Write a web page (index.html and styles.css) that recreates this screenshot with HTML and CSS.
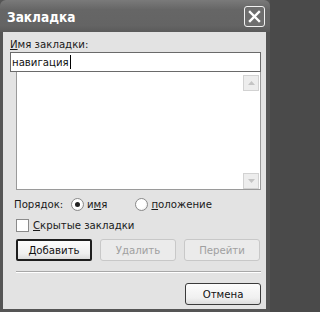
FILE: index.html
```html
<!DOCTYPE html>
<html>
<head>
<meta charset="utf-8">
<link rel="stylesheet" href="styles.css">
</head>
<body>
<div class="window">
  <div class="titlebar">
    <span class="title">Закладка</span>
    <span class="close"><svg width="13" height="13" viewBox="0 0 13 13"><path d="M2 2 L11 11 M11 2 L2 11" stroke="#fff" stroke-width="2.4" stroke-linecap="square"/></svg></span>
  </div>
  <div class="content">
    <div class="label"><u>И</u>мя закладки:</div>
    <div class="input"><span>навигация</span><span class="caret"></span></div>
    <div class="list">
      <div class="scroll">
        <div class="arrow"><svg width="7" height="4" viewBox="0 0 7 4"><path d="M0 4 L3.5 0 L7 4 Z" fill="#c4c4c4"/></svg></div>
        <div class="arrow"><svg width="7" height="4" viewBox="0 0 7 4"><path d="M0 0 L3.5 4 L7 0 Z" fill="#c4c4c4"/></svg></div>
      </div>
    </div>
    <div class="order">
      <span class="order-label">Порядок:</span>
      <span class="radio checked"></span><span class="opt">и<u>м</u>я</span>
      <span class="radio second"></span><span class="opt"><u>п</u>оложение</span>
    </div>
    <div class="check"><span class="box"></span><span><u>С</u>крытые закладки</span></div>
    <div class="buttons">
      <span class="btn default"><u>Д</u>обавить</span>
      <span class="btn disabled">Удалить</span>
      <span class="btn disabled">Перейти</span>
    </div>
    <div class="sep"></div>
    <div class="footer"><span class="btn">Отмена</span></div>
  </div>
</div>
</body>
</html>
```

FILE: styles.css
```css
html, body {
  margin: 0;
  padding: 0;
  background: #4a4a4a;
}
.window {
  width: 270px;
  height: 312px;
  box-sizing: border-box;
  display: flex;
  flex-direction: column;
  background: #555;
  font-family: "DejaVu Sans Condensed", "Liberation Sans", Arial, sans-serif;
  font-size: 11.3px;
  color: #1a1a1a;
}
.titlebar {
  height: 32px;
  flex: none;
  display: flex;
  align-items: center;
  justify-content: space-between;
  padding: 0 5px 0 7px;
  background: linear-gradient(#7a7a7a, #666 30%, #646464 80%, #5a5a5a);
  border-radius: 6px 6px 0 0;
}
.title {
  color: #fff;
  font-family: "DejaVu Sans Condensed", "Liberation Sans", Arial, sans-serif;
  font-weight: bold;
  font-size: 13.5px;
  margin-top: 2px;
}
.close {
  width: 19px;
  height: 19px;
  border: 1px solid #f2f2f2;
  border-radius: 3px;
  background: #6e6e6e;
  display: flex;
  align-items: center;
  justify-content: center;
}
.content {
  flex: 1;
  margin: 0 4px 3px 3px;
  background: #e3e3e3;
  padding: 5px 5px 0 7px;
  display: flex;
  flex-direction: column;
}
.label {
  height: 15px;
  line-height: 15px;
}
.input {
  height: 20px;
  box-sizing: border-box;
  border: 1px solid #6a6a6a;
  background: #fff;
  display: flex;
  align-items: center;
  padding-left: 1px;
  color: #111;
}
.caret {
  width: 1px;
  height: 14px;
  background: #000;
  margin-left: 1px;
}
.list {
  margin-left: 6px;
  height: 118px;
  box-sizing: border-box;
  border: 1px solid #9a9a9a;
  border-top: none;
  background: #fff;
  display: flex;
  justify-content: flex-end;
}
.scroll {
  width: 17px;
  display: flex;
  flex-direction: column;
  justify-content: space-between;
  padding: 3px 0 0 0;
}
.arrow {
  width: 16px;
  height: 16px;
  box-sizing: border-box;
  border: 1px solid #d2d2d2;
  background: #ededed;
  display: flex;
  align-items: center;
  justify-content: center;
}
.order {
  display: flex;
  align-items: center;
  height: 14px;
  margin-top: 7px;
  padding-left: 4px;
}
.order-label {
  width: 57px;
}
.radio {
  width: 11px;
  height: 11px;
  border: 1px solid #8a8a8a;
  border-radius: 50%;
  background: radial-gradient(circle at 40% 40%, #fff 50%, #e2e2e2);
  position: relative;
  margin-right: 3px;
}
.radio.checked::after {
  content: "";
  position: absolute;
  left: 3px;
  top: 3px;
  width: 5px;
  height: 5px;
  border-radius: 50%;
  background: #222;
}
.radio.second {
  margin-left: 28px;
}
.check {
  display: flex;
  align-items: center;
  height: 14px;
  margin-top: 7px;
  padding-left: 6px;
}
.box {
  width: 11px;
  height: 11px;
  border: 1px solid #8a8a8a;
  background: #fff;
  margin-right: 4px;
}
.buttons {
  display: flex;
  gap: 8px;
  margin-top: 7px;
  padding-left: 6px;
}
.btn {
  width: 76px;
  height: 22px;
  box-sizing: border-box;
  border: 1px solid #3a3a3a;
  border-radius: 3px;
  background: linear-gradient(#fcfcfc, #f0f0f0 70%, #dcdcdc);
  display: flex;
  align-items: center;
  justify-content: center;
  color: #111;
}
.btn.default {
  border: 2px solid #1e1e1e;
  border-radius: 2px;
}
.btn.disabled {
  border-color: #c8c8c8;
  background: #ebebeb;
  color: #a0a0a0;
}
.sep {
  margin: 10px 0 0 6px;
  border-top: 1px solid #a8a8a8;
  border-bottom: 1px solid #fff;
  height: 0;
}
.footer {
  display: flex;
  justify-content: flex-end;
  margin-top: 10px;
}
```
